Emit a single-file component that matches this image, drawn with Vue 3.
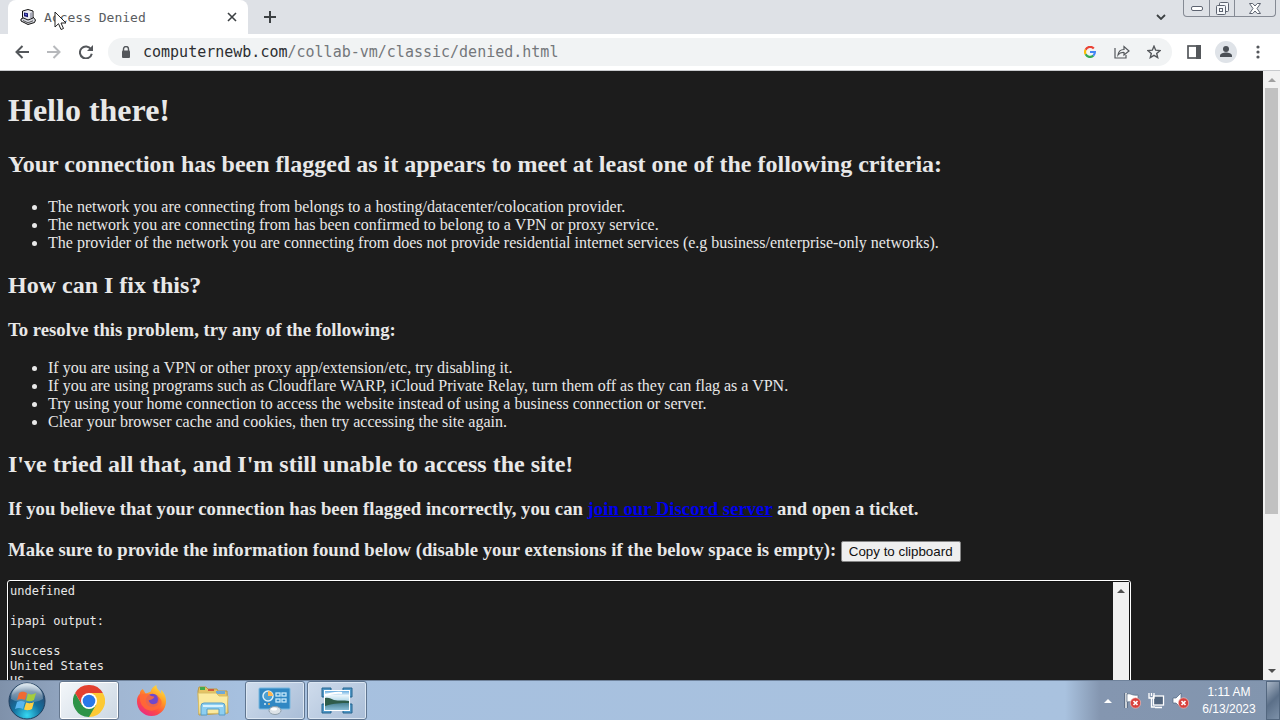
<script setup>
import { ref } from 'vue'

const criteria = [
  'The network you are connecting from belongs to a hosting/datacenter/colocation provider.',
  'The network you are connecting from has been confirmed to belong to a VPN or proxy service.',
  'The provider of the network you are connecting from does not provide residential internet services (e.g business/enterprise-only networks).'
]
const fixes = [
  'If you are using a VPN or other proxy app/extension/etc, try disabling it.',
  'If you are using programs such as Cloudflare WARP, iCloud Private Relay, turn them off as they can flag as a VPN.',
  'Try using your home connection to access the website instead of using a business connection or server.',
  'Clear your browser cache and cookies, then try accessing the site again.'
]
const report = ref('undefined\n\nipapi output:\n\nsuccess\nUnited States\nUS')
</script>

<template>
  <div class="desktop">
    <header class="tabstrip">
      <div class="tab">
        <svg class="favicon" viewBox="0 0 16 16" width="16" height="16" aria-hidden="true">
          <path d="M1 10l4-2h8l2.500 3-1 2.500L8 15.500l-7-3.500z" fill="#d5d7df" stroke="#111" />
          <path d="M2.500 2L8 .5 13 2v7l-5 2-5.500-2.500z" fill="#e9eaf0" stroke="#111" />
          <path d="M4 3.500l4 .8v4L4 7.300z" fill="#18186e" />
          <path d="M5 4.500l2 .4v1.600L5 6z" fill="#5d68d8" />
          <path d="M10 4l2.500-1v5.500L10 9.500z" fill="#a9abb9" />
          <path d="M3 11.500l5 2.300 5-2" fill="none" stroke="#555" />
        </svg>
        <span class="tab-title">Access Denied</span>
        <button class="icon-button tab-close" aria-label="Close tab">
          <svg viewBox="0 0 10 10" width="10" height="10"><path d="M1 1l8 8M9 1L1 9" stroke="#3c4043" stroke-width="1.600" /></svg>
        </button>
      </div>
      <button class="icon-button new-tab" aria-label="New tab">
        <svg viewBox="0 0 12 12" width="12" height="12"><path d="M6 0v12M0 6h12" stroke="#3c4043" stroke-width="2" /></svg>
      </button>
      <button class="icon-button tab-search" aria-label="Search tabs">
        <svg viewBox="0 0 10 6" width="10" height="6"><path d="M1 1l4 4 4-4" fill="none" stroke="#3c4043" stroke-width="1.800" /></svg>
      </button>
      <div class="window-buttons">
        <button aria-label="Minimize">
          <svg viewBox="0 0 12 5" width="12" height="5"><rect x=".5" y=".5" width="11" height="4" rx="1.500" fill="#fff" stroke="#5d6370" /></svg>
        </button>
        <button aria-label="Restore">
          <svg viewBox="0 0 13 13" width="13" height="13" fill="#f4f6f9" stroke="#5d6370"><rect x="3.500" y=".5" width="9" height="9" rx="1" /><rect x=".5" y="3.500" width="9" height="9" rx="1" /><rect x="3.500" y="6.500" width="3" height="3" /></svg>
        </button>
        <button class="wide" aria-label="Close">
          <svg viewBox="0 0 12 11" width="12" height="11"><path d="M.5.5h3.200L6 3 8.300.5h3.200L8 5.500l3.500 5H8.300L6 8l-2.300 2.500H.5L4 5.500z" fill="#fff" stroke="#5d6370" /></svg>
        </button>
      </div>
      <svg class="pointer" viewBox="0 0 13 20" width="13" height="20" aria-hidden="true">
        <path d="M1 1v15l3.500-3.300L7 18.500l2.500-1L7 12h5z" fill="#fff" stroke="#222" />
      </svg>
    </header>

    <nav class="toolbar">
      <div class="group">
        <button class="icon-button" aria-label="Back">
          <svg viewBox="0 0 14 14" width="14" height="14" fill="none" stroke="#54575b" stroke-width="2"><path d="M14 7H1.500M7.500 1L1.500 7l6 6" /></svg>
        </button>
        <button class="icon-button" aria-label="Forward">
          <svg viewBox="0 0 14 14" width="14" height="14" fill="none" stroke="#b7b9bc" stroke-width="2"><path d="M0 7h12.500M6.500 1l6 6-6 6" /></svg>
        </button>
        <button class="icon-button" aria-label="Reload">
          <svg viewBox="0 0 14 14" width="14" height="14"><path d="M12 4.200A6 6 0 1 0 12.800 8.800" fill="none" stroke="#54575b" stroke-width="2" /><path d="M14 0v6H8z" fill="#54575b" /></svg>
        </button>
      </div>
      <div class="omnibox">
        <svg class="lock" viewBox="0 0 10 12" width="10" height="12" aria-hidden="true"><path d="M2.500 5V3a2.500 2.500 0 0 1 5 0v2" fill="none" stroke="#54575b" stroke-width="1.400" /><rect x="1" y="4.500" width="8" height="7.500" rx="1" fill="#54575b" /></svg>
        <div class="url"><b>computernewb.com</b>/collab-vm/classic/denied.html</div>
        <button class="icon-button" aria-label="Google">
          <svg viewBox="0 0 12 12" width="12" height="12" fill="none" stroke-width="2.200">
            <path d="M9.800 2.500A5 5 0 0 0 1.600 3.700" stroke="#ea4335" />
            <path d="M1.600 3.700a5 5 0 0 0 0 4.600" stroke="#fbbc05" />
            <path d="M1.600 8.300A5 5 0 0 0 9.300 9.700" stroke="#34a853" />
            <path d="M9.300 9.700A5 5 0 0 0 10.900 6H6" stroke="#4285f4" />
          </svg>
        </button>
        <button class="icon-button" aria-label="Share">
          <svg viewBox="0 0 16 14" width="16" height="14" fill="none" stroke="#54575b" stroke-width="1.200"><path d="M1 3v10h11v-3" /><path d="M4 10c.5-4 3-5.500 6-5.500V1.500L15 6l-5 4V7.500C7.500 7.300 5.500 8 4 10z" /></svg>
        </button>
        <button class="icon-button" aria-label="Bookmark">
          <svg viewBox="0 0 14 14" width="14" height="14"><path d="M7 1.200l1.700 4 4.300.4-3.300 2.800 1 4.200L7 10.400l-3.700 2.200 1-4.200L1 5.600l4.300-.4z" fill="none" stroke="#54575b" stroke-width="1.400" /></svg>
        </button>
      </div>
      <div class="group">
        <button class="icon-button" aria-label="Side panel">
          <svg viewBox="0 0 14 14" width="14" height="14"><rect x="1" y="1" width="12" height="12" fill="none" stroke="#54575b" stroke-width="1.700" /><path d="M9 0h5v14H9z" fill="#54575b" /></svg>
        </button>
        <button class="icon-button" aria-label="Profile">
          <svg viewBox="0 0 22 22" width="22" height="22"><circle cx="11" cy="11" r="11" fill="#dfe3e8" /><circle cx="11" cy="8" r="3" fill="#4b5056" /><path d="M5 16v-1.200c0-2.200 3.500-3.300 6-3.300s6 1.100 6 3.300V16z" fill="#4b5056" /></svg>
        </button>
        <button class="icon-button" aria-label="Menu">
          <svg viewBox="0 0 4 14" width="4" height="14" fill="#54575b"><circle cx="2" cy="2" r="1.600" /><circle cx="2" cy="7" r="1.600" /><circle cx="2" cy="12" r="1.600" /></svg>
        </button>
      </div>
    </nav>

    <div class="viewport">
      <main class="document">
        <h1>Hello there!</h1>
        <h2>Your connection has been flagged as it appears to meet at least one of the following criteria:</h2>
        <ul>
          <li v-for="item in criteria" :key="item">{{ item }}</li>
        </ul>
        <h2>How can I fix this?</h2>
        <h3>To resolve this problem, try any of the following:</h3>
        <ul>
          <li v-for="item in fixes" :key="item">{{ item }}</li>
        </ul>
        <h2>I've tried all that, and I'm still unable to access the site!</h2>
        <h3>If you believe that your connection has been flagged incorrectly, you can <a href="#discord">join our Discord server</a> and open a ticket.</h3>
        <h3><label for="report">Make sure to provide the information found below (disable your extensions if the below space is empty):</label> <button class="copy">Copy to clipboard</button></h3>
        <div class="report-box">
          <textarea id="report" v-model="report" spellcheck="false" readonly></textarea>
          <div class="scrollbar inner" aria-hidden="true">
            <svg viewBox="0 0 8 4" width="8" height="4"><path d="M0 4l4-4 4 4z" fill="#505050" /></svg>
          </div>
        </div>
      </main>
      <div class="scrollbar" aria-hidden="true">
        <svg viewBox="0 0 8 4" width="8" height="4"><path d="M0 4l4-4 4 4z" fill="#a0a0a0" /></svg>
        <div class="track"><div class="thumb"></div></div>
        <svg viewBox="0 0 8 4" width="8" height="4"><path d="M0 0l4 4 4-4z" fill="#505050" /></svg>
      </div>
    </div>

    <footer class="taskbar">
      <button class="start" aria-label="Start">
        <svg viewBox="0 0 38 38" width="38" height="38">
          <defs>
            <radialGradient id="orb" cx=".5" cy=".9" r=".85"><stop offset="0" stop-color="#35d8f2" /><stop offset=".45" stop-color="#14719f" /><stop offset=".8" stop-color="#244f78" /><stop offset="1" stop-color="#8fb0c9" /></radialGradient>
            <linearGradient id="gloss" x1="0" y1="0" x2="0" y2="1"><stop offset="0" stop-color="#fff" stop-opacity=".7" /><stop offset="1" stop-color="#fff" stop-opacity=".15" /></linearGradient>
          </defs>
          <circle cx="19" cy="19" r="18" fill="url(#orb)" stroke="#203e5d" />
          <path d="M3 17a16 16 0 0 1 32 0c-9 5-23 5-32 0z" fill="url(#gloss)" />
          <path d="M11 11c3-2 5-1.500 8 0l-2 7c-3-1.500-5-1.500-8 0z" fill="#ef6a32" />
          <path d="M20 11.500c3 1.500 5 1 8-.5l-2 7c-3 1.500-5 1.500-8 .5z" fill="#a4cc3e" />
          <path d="M9 20c3-1.500 5-1.500 8 0l-2 7c-3-1.500-5-1.500-8 0z" fill="#59b5ee" />
          <path d="M18 20.500c3 1 5 1 8-.5l-2 7c-3 1.500-5 1.500-8 .5z" fill="#ffd044" />
        </svg>
      </button>
      <button class="task active" aria-label="Google Chrome">
        <svg viewBox="0 0 32 32" width="32" height="32">
          <path d="M16 16V8h13.860A16 16 0 0 1 16 32z" fill="#fcc934" />
          <path d="M2.140 8A16 16 0 0 0 16 32l6.930-12L16 16 9.070 20z" fill="#2d9348" />
          <path d="M16 8h13.860a16 16 0 0 0-27.720 0L9.070 20z" fill="#e3402f" />
          <circle cx="16" cy="16" r="8" fill="#fff" /><circle cx="16" cy="16" r="6.300" fill="#2878e8" />
        </svg>
      </button>
      <button class="task" aria-label="Firefox">
        <svg viewBox="0 0 32 32" width="31" height="31">
          <defs><linearGradient id="flame" x1=".9" y1="0" x2=".25" y2="1"><stop offset="0" stop-color="#fff044" /><stop offset=".4" stop-color="#ff9a26" /><stop offset=".7" stop-color="#ff4a43" /><stop offset="1" stop-color="#e82a87" /></linearGradient></defs>
          <path d="M7 4l3 5 5-2c1-4 4-6 6-7 0 3 1 4 3 6 1 1 1 2 2 3V5c4 4 5 8 5 12a15 15 0 0 1-30 0C1 13 2 11 4 9c0-2 1-4 3-5z" fill="url(#flame)" />
          <circle cx="17" cy="16" r="7" fill="#7048cc" />
          <path d="M4 12c3-4 8-4 11-1l4 1c-1 3-5 3-6 4 1 4 6 5 9 2 1-3 1-5-1-7 5 2 7 7 4 11-4 6-14 6-18 0-2-3-3-5-3-10z" fill="#ff6b35" opacity=".85" />
        </svg>
      </button>
      <button class="task" aria-label="File Explorer">
        <svg viewBox="0 0 34 30" width="34" height="30">
          <path d="M2 5l1-4h7l2 2h9l1 2h9l1 22-29 2z" fill="#e6c364" stroke="#b89949" />
          <path d="M4 1h5v3H4z" fill="#43a94c" /><path d="M12 3h6v2h-6z" fill="#cf5b3c" /><path d="M20 5h9v3h-9z" fill="#6ea9d8" />
          <path d="M2 7h18l3 3h9l-1 17-28 1z" fill="#fbeaa0" stroke="#d7bd68" />
          <path d="M5 29v-9q0-3 3-3h18q3 0 3 3v9h-6v-6H11v6z" fill="#8dcef0" stroke="#579dc9" />
          <path d="M7 20h20" stroke="#d8f2ff" stroke-width="2" />
        </svg>
      </button>
      <button class="task open" aria-label="Control Panel">
        <svg viewBox="0 0 34 28" width="34" height="28">
          <rect x="1" y="1" width="31" height="21" rx="1" fill="#3087c3" stroke="#77b7df" />
          <circle cx="10" cy="9" r="5" fill="#4d9fd2" stroke="#d9effa" stroke-width="1.500" /><path d="M10 9V4a5 5 0 0 1 5 5z" fill="#ffb653" />
          <g fill="none" stroke="#c7e8fa" stroke-width="1.300"><rect x="18" y="6" width="4" height="3" /><rect x="24" y="6" width="4" height="3" /><rect x="18" y="12" width="4" height="3" /><rect x="24" y="12" width="4" height="3" /></g>
          <circle cx="7" cy="17" r="1" fill="#d8eefa" /><circle cx="11" cy="17" r="1" fill="#ffb653" />
          <ellipse cx="17" cy="23.500" rx="6" ry="4" fill="#dce2e7" stroke="#8e9eab" /><ellipse cx="16" cy="22" rx="3" ry="1.500" fill="#fff" />
        </svg>
      </button>
      <button class="task open" aria-label="Photo viewer">
        <svg viewBox="0 0 32 28" width="32" height="28">
          <defs><linearGradient id="photo" x1="0" y1="0" x2="0" y2="1"><stop offset="0" stop-color="#5ba6de" /><stop offset=".25" stop-color="#eaf5fb" /><stop offset=".5" stop-color="#b9dcec" /><stop offset=".62" stop-color="#47808f" /><stop offset="1" stop-color="#8cc0d9" /></linearGradient></defs>
          <path d="M1 1h9v6H7v3H1zM22 1h9v9h-6V7h-3zM1 17h6v3h3v6H1zM25 17h6v9h-9v-6h3z" fill="#5298c6" stroke="#24658f" />
          <rect x="3.500" y="3.500" width="25" height="20" fill="url(#photo)" stroke="#fff" />
          <path d="M4 11c4-1 6 1 9 2 5 1 9 0 15 1v2c-9 0-14 0-24 3z" fill="#2f5c49" />
          <path d="M4 8c7-1 10-3 17-2" fill="none" stroke="#fff" stroke-width="2" />
        </svg>
      </button>
      <div class="tray">
        <button class="tray-icon" aria-label="Show hidden icons"><svg viewBox="0 0 8 5" width="8" height="5"><path d="M0 5l4-4 4 4z" fill="#fff" /></svg></button>
        <button class="tray-icon" aria-label="Action Center">
          <svg viewBox="0 0 17 17" width="17" height="17"><path d="M2 1v15" stroke="#3d4d62" stroke-width="3" /><path d="M2 1v15" stroke="#fff" stroke-width="1.500" /><path d="M3 2c4-1 5 2 11 1v7c-5 1-7-1-11 0z" fill="#fff" stroke="#566b83" stroke-width=".7" /><circle cx="11.500" cy="11" r="5.200" fill="#d7413d" stroke="#fac7c2" stroke-width=".6" /><path d="M9.500 9l4 4M13.500 9l-4 4" stroke="#fff" stroke-width="1.700" /></svg>
        </button>
        <button class="tray-icon" aria-label="Network">
          <svg viewBox="0 0 17 17" width="17" height="17"><rect x="5.500" y="4" width="10" height="9" fill="#53667e" stroke="#fff" stroke-width="1.300" /><path d="M7 15.500h7" stroke="#fff" stroke-width="1.500" /><path d="M1 1v5h5V1M3.500 1v3M3.500 6v9H7" fill="none" stroke="#fff" stroke-width="1.300" /></svg>
        </button>
        <button class="tray-icon" aria-label="Volume">
          <svg viewBox="0 0 17 17" width="17" height="17"><path d="M1 6h3l5-5v15l-5-5H1z" fill="#fff" stroke="#52667f" stroke-width=".7" /><circle cx="11.500" cy="11" r="5.200" fill="#d7413d" stroke="#fac7c2" stroke-width=".6" /><path d="M9.500 9l4 4M13.500 9l-4 4" stroke="#fff" stroke-width="1.700" /></svg>
        </button>
        <div class="clock"><span>1:11 AM</span><span>6/13/2023</span></div>
        <button class="show-desktop" aria-label="Show desktop"></button>
      </div>
    </footer>
  </div>
</template>

<style>
body {
  background: #1c1c1c;
}
</style>

<style scoped>
.desktop {
  display: flex;
  flex-direction: column;
  height: 100vh;
  overflow: hidden;
  font-family: "Liberation Sans", Arial, sans-serif;
}
button {
  padding: 0;
  border: 0;
  background: none;
}
svg {
  display: block;
}
.icon-button {
  display: flex;
  align-items: center;
  justify-content: center;
  width: 32px;
  height: 28px;
}
.tabstrip {
  position: relative;
  display: flex;
  flex: none;
  height: 34px;
  padding-left: 8px;
  background: #dee1e6;
}
.tab {
  display: flex;
  align-items: center;
  width: 240px;
  padding-left: 12px;
  box-sizing: border-box;
  border-radius: 8px 8px 0 0;
  background: #fff;
}
.tab-title {
  flex: 1;
  margin-left: 8px;
  font: 13px "DejaVu Sans Mono", monospace;
  color: #5a5d61;
}
.new-tab {
  height: 34px;
  margin-left: 6px;
}
.tab-search {
  height: 34px;
  margin-left: auto;
}
.window-buttons {
  display: flex;
  height: 16px;
  margin: 0 4px 0 6px;
  border: 1px solid #858a94;
  border-top: 0;
  border-radius: 0 0 4px 4px;
}
.window-buttons button {
  display: flex;
  align-items: center;
  justify-content: center;
  width: 25px;
}
.window-buttons button + button {
  border-left: 1px solid #858a94;
}
.window-buttons .wide {
  width: 41px;
}
.pointer {
  position: absolute;
  left: 54px;
  top: 11px;
}
.toolbar {
  display: flex;
  align-items: center;
  gap: 6px;
  flex: none;
  height: 36px;
  padding: 0 6px;
  border-bottom: 1px solid #c8cacd;
  background: #fff;
}
.group {
  display: flex;
}
.omnibox {
  display: flex;
  flex: 1;
  align-items: center;
  height: 28px;
  padding: 0 2px 0 13px;
  border-radius: 14px;
  background: #f1f3f4;
}
.url {
  flex: 1;
  margin-left: 12px;
  font: 15px "DejaVu Sans Mono", monospace;
  color: #74777b;
}
.url b {
  font-weight: normal;
  color: #2c2e31;
}
.viewport {
  display: flex;
  flex: 1;
  min-height: 0;
  background: #1c1c1c;
}
.document {
  flex: 1;
  min-width: 0;
  padding: 0 8px;
  overflow: hidden;
  color: #e8e8e8;
  font-family: "Liberation Serif", "Times New Roman", serif;
}
.document a {
  color: #0000ee;
}
.copy {
  padding: 2px 7px;
  border: 1px solid #858585;
  border-radius: 2px;
  background: #efefef;
  color: #111;
  font-family: "Liberation Sans", Arial, sans-serif;
}
.report-box {
  display: flex;
  width: 90%;
  height: 240px;
  box-sizing: border-box;
  border: 1px solid #111;
  border-radius: 2px;
  outline: 1px solid #fff;
}
.report-box textarea {
  flex: 1;
  padding: 2px 1px;
  border: 0;
  outline: 0;
  resize: none;
  overflow: hidden;
  background: #1c1c1c;
  color: #e8e8e8;
  font: 12px/15px "DejaVu Sans Mono", monospace;
}
.scrollbar {
  display: flex;
  flex-direction: column;
  align-items: center;
  gap: 6px;
  width: 15px;
  padding: 7px 1px;
  background: #f1f1f1;
}
.scrollbar.inner {
  width: 14px;
}
.track {
  flex: 1;
  width: 13px;
}
.thumb {
  height: 74%;
  background: #c1c1c1;
}
.taskbar {
  display: flex;
  align-items: center;
  flex: none;
  height: 39px;
  border-top: 1px solid #6f829b;
  background: linear-gradient(90deg, #7f91aa, #a1b7d3 120px, #a6c0df 240px, #a9c2df 1065px, #8496b0 1100px, #8295ae);
}
.start {
  display: flex;
  width: 59px;
  padding-left: 8px;
  box-sizing: border-box;
}
.task {
  display: flex;
  align-items: center;
  justify-content: center;
  width: 60px;
  height: 39px;
  margin-right: 2px;
  box-sizing: border-box;
  border: 1px solid transparent;
  border-radius: 3px;
}
.task.open {
  border-color: #5f7590;
  background: linear-gradient(135deg, #cfdcec, #a9bdd7);
  box-shadow: inset 0 0 0 1px #dce7f3;
}
.task.active {
  border-color: #66788f;
  background: linear-gradient(135deg, #f4f7fa, #cbd7e3);
  box-shadow: inset 0 0 0 1px #fff;
}
.tray {
  display: flex;
  align-items: center;
  height: 100%;
  margin-left: auto;
}
.tray-icon {
  display: flex;
  align-items: center;
  justify-content: center;
  width: 24px;
}
.clock {
  display: flex;
  flex-direction: column;
  align-items: center;
  width: 74px;
  color: #fff;
  font-size: 12px;
  line-height: 17px;
}
.show-desktop {
  width: 14px;
  height: 100%;
  border: 1px solid #53677f;
  background: linear-gradient(135deg, #a8b5c5, #5b6f88 50%, #7d91a9);
}
</style>
